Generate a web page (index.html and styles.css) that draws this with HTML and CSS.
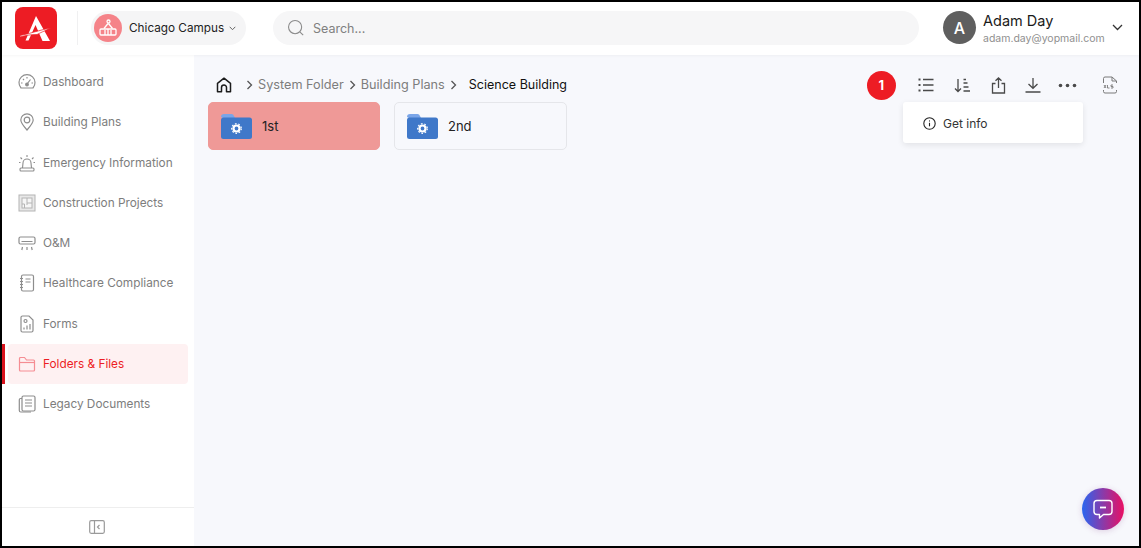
FILE: index.html
```html
<!DOCTYPE html>
<html lang="en">
<head>
<meta charset="utf-8">
<title>Science Building</title>
<link rel="stylesheet" href="styles.css">
</head>
<body>
<div class="frame">
  <header class="topbar">
    <div class="logo">
      <svg width="42" height="42" viewBox="0 0 42 42"><path d="M21 9 L10.500 33.500 L13.500 33.500 L20.500 18 L27.500 34 L35 34 Z" fill="#fff"/><path d="M5 28.500 C14 27 26 22.500 36 21 C29 24 25 26 22 27.500 C15 27.500 10 28.500 5 30 Z" fill="#fff" stroke="#ed1c24" stroke-width=".7"/></svg>
    </div>
    <div class="divider"></div>
    <div class="campus">
      <span class="campus-icon">
        <svg width="20" height="20" viewBox="0 0 20 20" fill="none" stroke="#fff" stroke-width="1.300"><circle cx="10.500" cy="3.500" r="1.500"/><path d="M10 5.500 L6 10.500 M10.500 5.500 L14.500 10.500"/><rect x="2" y="11" width="16" height="6" rx="1"/><path d="M7 17v-5M10 17v-6M13 17v-5"/></svg>
      </span>
      <span class="campus-name">Chicago Campus</span>
      <svg width="7" height="5" viewBox="0 0 7 5" fill="none" stroke="#666" stroke-width="1"><path d="M.7 .8 L3.500 3.700 L6.300 .8"/></svg>
    </div>
    <div class="search">
      <svg width="18" height="18" viewBox="0 0 20 20" fill="none" stroke="#8a8a8a" stroke-width="1.200"><circle cx="9" cy="9" r="7.300"/><path d="M14.500 14.500 L18 18"/></svg>
      <span>Search...</span>
    </div>
    <div class="user">
      <span class="avatar">A</span>
      <div class="user-text">
        <div class="user-name">Adam Day</div>
        <div class="user-mail">adam.day@yopmail.com</div>
      </div>
      <svg class="user-chev" width="11" height="7" viewBox="0 0 11 7" fill="none" stroke="#333" stroke-width="1.300"><path d="M1 1 L5.500 5.500 L10 1"/></svg>
    </div>
  </header>
  <div class="body">
    <aside class="sidebar">
      <nav class="nav">
        <a class="nav-item"><svg width="18" height="18" viewBox="0 0 18 18" fill="none" stroke="#8d8d8d" stroke-width="1.200"><path d="M3 15 A8 8 0 1 1 15 15 Z"/><path d="M9 11 L12.500 6.500 M3 10h1.500M13.500 10H15M5 6l1 1M9 4v1.500" /><circle cx="9" cy="11.500" r="1.300" fill="#8d8d8d"/></svg><span>Dashboard</span></a>
        <a class="nav-item"><svg width="18" height="18" viewBox="0 0 18 18" fill="none" stroke="#8d8d8d" stroke-width="1.200"><path d="M9 17 C5 12.500 2.800 10 2.800 7 A6.200 6.200 0 0 1 15.200 7 C15.200 10 13 12.500 9 17 Z"/><circle cx="9" cy="7" r="2.800"/></svg><span>Building Plans</span></a>
        <a class="nav-item"><svg width="18" height="18" viewBox="0 0 18 18" fill="none" stroke="#8d8d8d" stroke-width="1.100"><path d="M4.500 14 L5 9 A4 4 0 0 1 13 9 L13.500 14"/><rect x="2" y="14" width="14" height="3" rx="1"/><path d="M9 1v2M2.500 3.500l1.500 1.500M15.500 3.500 14 5M1 8.500h1.500M15.500 8.500H17"/></svg><span>Emergency Information</span></a>
        <a class="nav-item"><svg width="18" height="18" viewBox="0 0 18 18" fill="none" stroke="#b4b4b4" stroke-width="1"><rect x="1" y="1" width="16" height="16" fill="#e8e8e8"/><rect x="4" y="4" width="10" height="10" fill="#f6f6f6"/><path d="M9 4v5h5M9 9v2M6.500 14v-4H4"/></svg><span>Construction Projects</span></a>
        <a class="nav-item"><svg width="18" height="18" viewBox="0 0 18 18" fill="none" stroke="#8d8d8d" stroke-width="1.200"><rect x="1" y="3" width="16" height="7" rx="1.500"/><path d="M3.500 7.500h11M4.500 13l-.7 3M9 13v3M13.500 13l.7 3"/></svg><span>O&amp;M</span></a>
        <a class="nav-item"><svg width="18" height="18" viewBox="0 0 18 18" fill="none" stroke="#8d8d8d" stroke-width="1.200"><rect x="3.500" y="1" width="12" height="16" rx="1.500"/><path d="M7.500 5h5M7.500 8h5M2 4.500h3M2 7.500h3M2 10.500h3M2 13.500h3"/></svg><span>Healthcare Compliance</span></a>
        <a class="nav-item"><svg width="18" height="18" viewBox="0 0 18 18" fill="none" stroke="#8d8d8d" stroke-width="1.200"><path d="M3 2.500 A1.500 1.500 0 0 1 4.500 1 H11 L15 5 V15.500 A1.500 1.500 0 0 1 13.500 17 H4.500 A1.500 1.500 0 0 1 3 15.500 Z"/><path d="M6 14.500v-2M9 14.500v-4M12 14.500v-5.500"/><circle cx="7.500" cy="6" r="1.500"/></svg><span>Forms</span></a>
        <a class="nav-item active"><svg width="18" height="18" viewBox="0 0 18 18" fill="none" stroke="#f58d93" stroke-width="1.200"><path d="M1.500 15 V3.500 A1 1 0 0 1 2.500 2.500 H6.500 L8.500 5 H15.500 A1 1 0 0 1 16.500 6 V15 A1 1 0 0 1 15.500 16 H2.500 A1 1 0 0 1 1.500 15 Z"/><path d="M1.500 7.500h15"/></svg><span>Folders &amp; Files</span></a>
        <a class="nav-item"><svg width="18" height="18" viewBox="0 0 18 18" fill="none" stroke="#8d8d8d" stroke-width="1.200"><rect x="4" y="1" width="13" height="15" rx="1.500"/><path d="M4 3.500H2.500A1.200 1.200 0 0 0 1.300 4.700V15.500A1.500 1.500 0 0 0 2.800 17H13M7 5h7M7 8h7M7 11h7"/></svg><span>Legacy Documents</span></a>
      </nav>
      <div class="collapse">
        <svg width="16" height="14" viewBox="0 0 16 14" fill="none" stroke="#9a9a9a" stroke-width="1.200"><rect x=".7" y=".7" width="14.600" height="12.600" rx="1.500"/><path d="M5.500 .7v12.600"/><path d="M10.500 5 L8.500 7 L10.500 9"/></svg>
      </div>
    </aside>
    <main class="main">
      <div class="toolbar-row">
        <div class="crumbs">
          <svg class="home" width="16" height="16" viewBox="0 0 16 16" fill="none" stroke="#1c1c1c" stroke-width="1.500"><path d="M1.500 14.800 V6.300 L8 1.200 L14.500 6.300 V14.800 H10.500 V10.500 A2.500 2.500 0 0 0 5.500 10.500 V14.800 Z" stroke-linejoin="round"/></svg>
          <svg class="sep" width="7" height="10" viewBox="0 0 7 10" fill="none" stroke="#555" stroke-width="1.300"><path d="M1.500 1 L5.500 5 L1.500 9"/></svg>
          <span class="crumb">System Folder</span>
          <svg class="sep" width="7" height="10" viewBox="0 0 7 10" fill="none" stroke="#555" stroke-width="1.300"><path d="M1.500 1 L5.500 5 L1.500 9"/></svg>
          <span class="crumb">Building Plans</span>
          <svg class="sep" width="7" height="10" viewBox="0 0 7 10" fill="none" stroke="#555" stroke-width="1.300"><path d="M1.500 1 L5.500 5 L1.500 9"/></svg>
          <span class="crumb current">Science Building</span>
        </div>
        <div class="tools">
          <span class="badge">1</span>
          <span class="tool"><svg width="16" height="14" viewBox="0 0 16 14" fill="none" stroke="#4a4a4a" stroke-width="1.500"><path d="M5 1.500h10.500M5 7h10.500M5 12.500h10.500"/><path d="M.5 1.500h2M.5 7h2M.5 12.500h2" stroke-width="2"/></svg></span>
          <span class="tool"><svg width="16" height="15" viewBox="0 0 16 15" fill="none" stroke="#4a4a4a" stroke-width="1.300"><path d="M4 1v12.500M1 10.500l3 3 3-3M9.500 1.500h2.500M9.500 5h4M9.500 9h5M9.500 13h6.500"/></svg></span>
          <span class="tool tool-share"><svg width="15" height="17" viewBox="0 0 15 17" fill="none" stroke="#4a4a4a" stroke-width="1.300"><path d="M4.500 6.500H1.500V16H13.500V6.500H10.500M7.500 11V1M4.500 3.800 7.500 1l3 2.800"/></svg></span>
          <span class="tool tool-after-share"><svg width="16" height="16" viewBox="0 0 16 16" fill="none" stroke="#4a4a4a" stroke-width="1.300"><path d="M8 1v10M3.500 7 8 11.300 12.500 7M.5 15h15"/></svg></span>
          <span class="tool tool-more"><svg width="19" height="5" viewBox="0 0 19 5" fill="#4a4a4a"><circle cx="2.500" cy="2.500" r="1.800"/><circle cx="9.500" cy="2.500" r="1.800"/><circle cx="16.500" cy="2.500" r="1.800"/></svg></span>
          <svg class="xls" width="16" height="18" viewBox="0 0 16 18" fill="none" stroke="#7a7a7a" stroke-width="1"><path d="M1.500 7V2.500A1.500 1.500 0 0 1 3 1H10L14.500 5V7M14.500 14v1.500A1.500 1.500 0 0 1 13 17H3A1.500 1.500 0 0 1 1.500 15.500V14"/><path d="M10 1v4h4.500"/><path d="M2 9l2 3M4 9l-2 3M5.500 9v3h2M11 9H9v1.500h2V12H9" stroke-width=".9"/></svg>
        </div>
      </div>
      <div class="menu">
        <svg width="13" height="13" viewBox="0 0 13 13" fill="none" stroke="#222" stroke-width="1.100"><circle cx="6.500" cy="6.500" r="5.700"/><path d="M6.500 5.800v3.500"/><path d="M6.500 3.400v1.100"/></svg>
        <span>Get info</span>
      </div>
      <div class="cards">
        <div class="card selected">
          <svg width="31" height="25" viewBox="0 0 31 25"><path d="M0 3 A3 3 0 0 1 3 0 H10 A3 3 0 0 1 13 2 L14 4 H2 Z" fill="#7aa5e8"/><rect y="3.500" width="31" height="21.500" rx="2.500" fill="#3f78c9"/><circle cx="15.500" cy="14.500" r="3" fill="none" stroke="#fff" stroke-width="2.200"/><circle cx="15.500" cy="14.500" r="4.800" fill="none" stroke="#fff" stroke-width="1.200" stroke-dasharray="1.700 1.700"/></svg>
          <span>1st</span>
        </div>
        <div class="card">
          <svg width="31" height="25" viewBox="0 0 31 25"><path d="M0 3 A3 3 0 0 1 3 0 H10 A3 3 0 0 1 13 2 L14 4 H2 Z" fill="#7aa5e8"/><rect y="3.500" width="31" height="21.500" rx="2.500" fill="#3f78c9"/><circle cx="15.500" cy="14.500" r="3" fill="none" stroke="#fff" stroke-width="2.200"/><circle cx="15.500" cy="14.500" r="4.800" fill="none" stroke="#fff" stroke-width="1.200" stroke-dasharray="1.700 1.700"/></svg>
          <span>2nd</span>
        </div>
      </div>
      <button class="chat" type="button" aria-label="Chat">
        <svg width="22" height="22" viewBox="0 0 22 22" fill="none" stroke="#fff" stroke-width="1.400"><path d="M5 2.500H17A3 3 0 0 1 20 5.500V13.500A3 3 0 0 1 17 16.500H11.500L7.500 20V16.500H5A3 3 0 0 1 2 13.500V5.500A3 3 0 0 1 5 2.500Z" stroke-linejoin="round"/><path d="M8 9.500h6" stroke-width="1.800"/></svg>
      </button>
    </main>
  </div>
</div>
</body>
</html>
```
FILE: styles.css
```css
* { box-sizing: border-box; }
html, body { margin: 0; height: 100%; }
body { font-family: Inter, "Liberation Sans", sans-serif; background: #fff; overflow: hidden; }
.frame { width: 1141px; height: 548px; border: 2px solid #000; display: flex; flex-direction: column; overflow: hidden; }

.topbar { height: 53px; flex: none; display: flex; align-items: flex-start; background: #fff; padding: 5px 0 0 13px; position: relative; z-index: 2; box-shadow: 0 1px 3px rgba(0,0,0,.04); }
.logo { width: 42px; height: 42px; background: #ed1c24; border-radius: 8px; flex: none; }
.logo svg { display: block; }
.divider { width: 1px; height: 34px; background: #f0f0f1; margin: 4px 13px 0 20px; flex: none; }
.campus { width: 155px; height: 34px; margin-top: 4px; border-radius: 17px; background: #f5f5f6; display: flex; align-items: center; padding-left: 3px; flex: none; }
.campus-icon { width: 28px; height: 28px; border-radius: 50%; background: #f58389; display: flex; align-items: center; justify-content: center; flex: none; }
.campus-name { font-size: 11.750px; color: #222; margin: 0 5px 0 7px; white-space: nowrap; }
.search { width: 646px; height: 34px; margin: 4px 0 0 27px; border-radius: 17px; background: #f6f6f7; display: flex; align-items: center; gap: 8px; padding-left: 14px; font-size: 12.500px; color: #808080; flex: none; }
.user { display: flex; align-items: flex-start; margin: 4px 0 0 24px; flex: none; }
.avatar { width: 33px; height: 33px; border-radius: 50%; background: #5f5f5f; color: #fff; font-size: 16px; font-weight: 500; display: flex; align-items: center; justify-content: center; flex: none; }
.user-text { margin-left: 7px; width: 129px; }
.user-name { font-size: 14.500px; line-height: 18px; color: #1a1a1a; margin-top: 1px; }
.user-mail { font-size: 10.500px; line-height: 14px; color: #8f8f8f; margin-top: 2px; white-space: nowrap; }
.user-chev { margin-top: 13px; flex: none; }

.body { flex: 1; display: flex; min-height: 0; }
.sidebar { width: 192px; flex: none; background: #fff; display: flex; flex-direction: column; }
.nav { flex: 1; display: flex; flex-direction: column; padding-top: 7px; }
.nav-item { height: 40px; margin: 0 6.500px .25px 6px; display: flex; align-items: center; gap: 7px; padding-left: 10px; font-size: 11.800px; color: #7d7d7d; border-radius: 4px; position: relative; white-space: nowrap; }
.nav-item svg { flex: none; }
.nav-item.active { background: #fef1f2; color: #ed1c24; }
.nav-item.active::before { content: ""; position: absolute; left: -6px; top: 0; bottom: 0; width: 2.500px; background: #d8121c; }
.collapse { height: 39px; flex: none; border-top: 1px solid #eeeeee; display: flex; align-items: center; justify-content: center; padding-right: 2px; }

.main { flex: 1; background: #f7f8fc; position: relative; padding: 0 13px 0 14px; min-width: 0; }
.toolbar-row { display: flex; align-items: center; justify-content: space-between; height: 47px; padding-top: 14px; }
.crumbs { display: flex; align-items: center; padding-left: 8px; font-size: 12.700px; color: #7d7d7d; white-space: nowrap; margin-top: -2px; }
.home { margin-right: 14px; }
.sep { margin-right: 5px; }
.crumb { margin-right: 5px; }
.crumb.current { color: #111; margin-left: 7px; font-size: 12.500px; }
.tools { display: flex; align-items: center; padding-right: 8px; margin-top: -1px; }
.badge { width: 29px; height: 29px; border-radius: 50%; background: #ed1c24; color: #fff; font-size: 13px; font-weight: 700; display: flex; align-items: center; justify-content: center; margin-right: 13px; }
.tool { width: 35.250px; display: flex; justify-content: center; align-items: center; }
.tool-share { margin-left: 2px; }
.tool-after-share { margin-left: -1px; }
.tool-more { margin-left: -1px; }
.xls { margin-left: 17px; }

.cards { display: flex; gap: 14px; }
.card { width: 173px; height: 48px; border-radius: 5px; border: 1px solid #e5e6ea; background: #f7f8fc; display: flex; align-items: center; padding-left: 12px; gap: 10px; font-size: 13px; color: #222; }
.card.selected { width: 172px; background: #ef9997; border-color: #ef9997; }

.menu { position: absolute; left: 709px; top: 47px; width: 180px; height: 41px; background: #fff; border-radius: 3px; box-shadow: 0 2px 6px rgba(0,0,0,.09); display: flex; align-items: center; gap: 7px; padding: 1px 0 0 20px; font-size: 12px; color: #333; z-index: 3; }

.chat { position: absolute; right: 15px; bottom: 16px; width: 42px; height: 42px; border: 0; padding: 0; border-radius: 50%; background: linear-gradient(90deg, #2a66f0, #ea0f62); display: flex; align-items: center; justify-content: center; box-shadow: 0 1px 6px rgba(120,40,120,.2); }
```
